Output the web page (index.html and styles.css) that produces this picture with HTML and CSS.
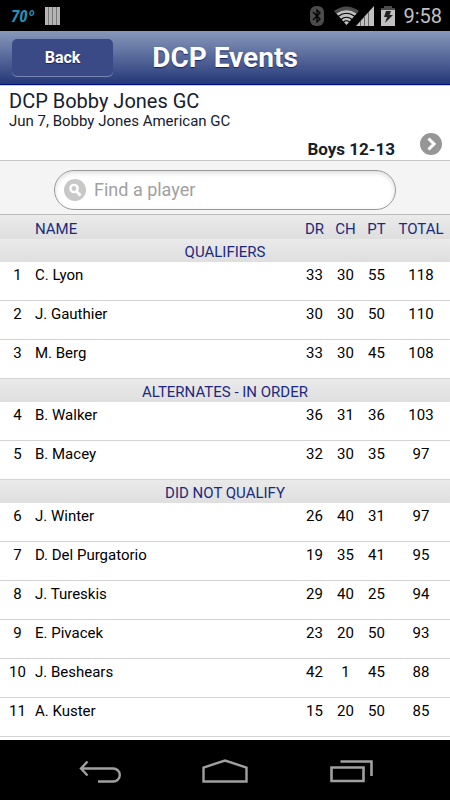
FILE: index.html
```html
<!DOCTYPE html>
<html lang="en">
<head>
<meta charset="utf-8">
<meta name="viewport" content="width=device-width, initial-scale=1">
<title>DCP Events</title>
<link rel="stylesheet" href="styles.css">
</head>
<body>
<div class="status">
  <span class="temp">70º</span>
  <svg class="bars" width="16" height="20" viewBox="0 0 16 20"><path fill="#b5b5b5" d="M0 1h15v18H0z"/><path stroke="#777" d="M3.500 1v18M7.500 1v18M11.500 1v18"/></svg>
  <svg class="bluetooth" width="14" height="20" viewBox="0 0 14 20"><rect width="14" height="20" rx="6" fill="#4b4b4b"/><path d="M3 6l7 7-3 3V4l3 3-7 7" fill="none" stroke="#000" stroke-width="1.300"/></svg>
  <svg class="wifi" width="25" height="20" viewBox="0 0 25 20"><path fill="#4b4b4b" d="M0 5Q12.500-4 25 5L12.500 19z"/><path fill="#c0c0c0" d="M2.500 7.500Q12.500 1 22.500 7.500L12.500 19z"/><path d="M4 10.500Q12.500 4 21 10.500M7 13.500Q12.500 9 18 13.500M9.500 16Q12.500 13.500 15.500 16" fill="none" stroke="#000" stroke-width="1.200"/></svg>
  <svg class="signal" width="19" height="20" viewBox="0 0 19 20"><path fill="#c0c0c0" d="M0 20L18 0v20z"/><path stroke="#666" d="M4.500 15v5M8.500 10v10M12.500 6v14"/></svg>
  <svg class="battery" width="14" height="20" viewBox="0 0 14 20"><path fill="#4b4b4b" d="M3 0h8v2h3v3H0V2h3z"/><path fill="#c0c0c0" d="M0 4h14v16H0z"/><path fill="#222" d="M5 5h5L8.500 9H12L4 17l2-6H3z"/></svg>
  <span class="clock">9:58</span>
</div>
<header class="bar">
  <button class="back" type="button">Back</button>
  <h1>DCP Events</h1>
</header>
<main>
  <section class="event">
    <h2>DCP Bobby Jones GC</h2>
    <p>Jun 7, Bobby Jones American GC</p>
    <div class="division">
      <strong>Boys 12-13</strong>
      <a href="#players" aria-label="Next division"><svg width="22" height="22" viewBox="0 0 22 22"><circle cx="11" cy="11" r="11" fill="#969696"/><path d="M8.500 5.500l5.500 5.500-5.500 5.500" fill="none" stroke="#fff" stroke-width="3"/></svg></a>
    </div>
  </section>
  <form class="search">
    <label class="field">
      <svg width="22" height="22" viewBox="0 0 22 22"><circle cx="11" cy="11" r="11" fill="#c8c8c8"/><circle cx="10" cy="9.500" r="3.600" fill="none" stroke="#fff" stroke-width="2.400"/><path d="M12.500 12.500l4 4" stroke="#fff" stroke-width="3"/></svg>
      <input type="search" placeholder="Find a player" aria-label="Find a player">
    </label>
  </form>
  <table id="players">
    <colgroup><col class="rank"><col><col class="score"><col class="score"><col class="score"><col class="total"></colgroup>
    <thead><tr><th></th><th class="name">NAME</th><th>DR</th><th>CH</th><th>PT</th><th>TOTAL</th></tr></thead>
    <tbody>
      <tr class="group"><th colspan="6">QUALIFIERS</th></tr>
      <tr><td>1</td><td class="name">C. Lyon</td><td>33</td><td>30</td><td>55</td><td>118</td></tr>
      <tr><td>2</td><td class="name">J. Gauthier</td><td>30</td><td>30</td><td>50</td><td>110</td></tr>
      <tr><td>3</td><td class="name">M. Berg</td><td>33</td><td>30</td><td>45</td><td>108</td></tr>
    </tbody>
    <tbody>
      <tr class="group"><th colspan="6">ALTERNATES - IN ORDER</th></tr>
      <tr><td>4</td><td class="name">B. Walker</td><td>36</td><td>31</td><td>36</td><td>103</td></tr>
      <tr><td>5</td><td class="name">B. Macey</td><td>32</td><td>30</td><td>35</td><td>97</td></tr>
    </tbody>
    <tbody>
      <tr class="group"><th colspan="6">DID NOT QUALIFY</th></tr>
      <tr><td>6</td><td class="name">J. Winter</td><td>26</td><td>40</td><td>31</td><td>97</td></tr>
      <tr><td>7</td><td class="name">D. Del Purgatorio</td><td>19</td><td>35</td><td>41</td><td>95</td></tr>
      <tr><td>8</td><td class="name">J. Tureskis</td><td>29</td><td>40</td><td>25</td><td>94</td></tr>
      <tr><td>9</td><td class="name">E. Pivacek</td><td>23</td><td>20</td><td>50</td><td>93</td></tr>
      <tr><td>10</td><td class="name">J. Beshears</td><td>42</td><td>1</td><td>45</td><td>88</td></tr>
      <tr><td>11</td><td class="name">A. Kuster</td><td>15</td><td>20</td><td>50</td><td>85</td></tr>
    </tbody>
  </table>
</main>
<nav class="system">
  <button type="button" aria-label="Back"><svg width="44" height="26" viewBox="0 0 44 26"><path d="M10.500 2.500L4 9.500l6.500 7M4 9.500h32.300a6.500 6.500 0 0 1 0 13H21" fill="none" stroke="#a0a0a0" stroke-width="2.400"/></svg></button>
  <button type="button" aria-label="Home"><svg width="48" height="26" viewBox="0 0 48 26"><path d="M2.500 22.500v-14L24 1.500l21.500 7v14z" fill="none" stroke="#a0a0a0" stroke-width="2.400"/></svg></button>
  <button type="button" aria-label="Recent apps"><svg width="44" height="26" viewBox="0 0 44 26"><path d="M2.500 8.500h32v13.500h-32zM11.500 2.500h31V17" fill="none" stroke="#a0a0a0" stroke-width="2.600"/></svg></button>
</nav>
</body>
</html>
```
FILE: styles.css
```css
* { box-sizing: border-box; }
body {
  margin: 0;
  min-height: 100vh;
  display: flex;
  flex-direction: column;
  background: #fff;
  color: #000;
  font: 15px/20px Roboto, sans-serif;
}
h1, h2, p { margin: 0; }
button { padding: 0; border: 0; font: inherit; color: inherit; background: none; }
svg { display: block; }

.status {
  display: flex;
  align-items: center;
  height: 31px;
  padding: 0 8px 0 11px;
  background: #000;
}
.temp { color: #2b8fb8; font-size: 17px; font-style: italic; font-weight: 700; font-family: "Roboto Condensed", Roboto, sans-serif; }
.bars { margin-left: 11px; }
.bluetooth { margin-left: auto; margin-right: 10px; }
.signal { margin-left: -3px; margin-right: 6px; }
.clock { margin-left: 8px; color: #c0c0c0; font-size: 20px; }

.bar {
  display: grid;
  grid-template-columns: 1fr auto 1fr;
  align-items: center;
  height: 54px;
  padding: 0 12px;
  border-bottom: 1px solid #00107c;
  background: linear-gradient(#8798bb, #253878);
  color: #fff;
}
.back {
  justify-self: start;
  width: 101px;
  height: 37px;
  border-radius: 5px;
  background: #3a4a86;
  box-shadow: 0 1px 0 #7583ae;
  font-weight: 700;
  font-size: 16px;
  text-shadow: 0 1px 1px #14246c;
}
.bar h1 { font-size: 28px; line-height: 32px; font-weight: 700; text-shadow: 0 1px 1px #14246c; }

.event {
  height: 76px;
  padding: 5px 8px 0 9px;
  border-top: 1px solid #ccc;
  border-bottom: 1px solid #c4c4c4;
  color: #15202c;
}
.event h2 { font-size: 20px; line-height: 20px; font-weight: 400; }
.event p { line-height: 20px; }
.division { display: flex; justify-content: flex-end; align-items: flex-start; gap: 25px; }
.division a { padding-top: 2px; }
.division strong { font-size: 17px; line-height: 36px; }

.search {
  display: flex;
  justify-content: center;
  padding: 9px 54px 4px;
  background: #f4f4f4;
}
.field {
  display: flex;
  flex: 1;
  align-items: center;
  gap: 8px;
  height: 40px;
  padding: 0 9px;
  border: 1px solid #999;
  border-radius: 20px;
  background: #fff;
  box-shadow: inset 0 2px 5px #ddd;
}
.field input {
  flex: 1;
  min-width: 0;
  padding: 0;
  border: 0;
  outline: 0;
  background: none;
  font: 18px/24px Roboto, sans-serif;
}
.field input::placeholder { color: #a0a0a0; }

table { width: 100%; table-layout: fixed; border-collapse: separate; border-spacing: 0; }
.rank { width: 35px; }
.score { width: 31px; }
.total { width: 58px; }
th, td { padding: 0; text-align: center; vertical-align: top; }
th { color: #1c2a7c; font-weight: 400; }
.name { text-align: left; }
thead th { height: 25px; padding-top: 4px; border-top: 1px solid #bbb; background: linear-gradient(#ebebeb, #dedede); }
.group th { height: 23px; padding-top: 3px; background: linear-gradient(#eaeaea, #dfdfdf); }
td { height: 39px; padding-top: 3px; border-bottom: 1px solid #d4d4d4; }

.system {
  display: flex;
  justify-content: space-between;
  align-items: center;
  height: 60px;
  margin-top: auto;
  padding: 3px 77px 0;
  background: #000;
}
```
